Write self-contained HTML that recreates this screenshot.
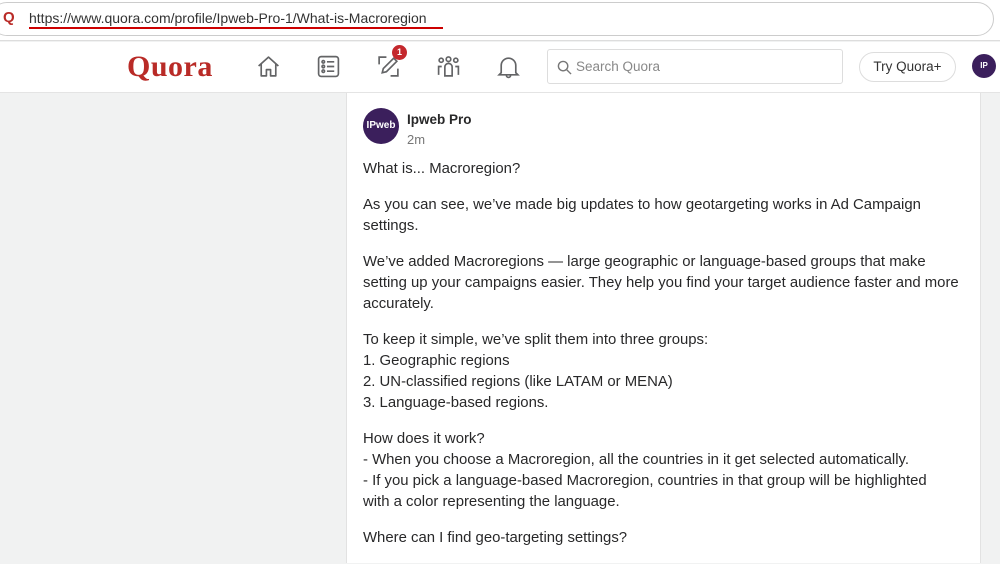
<!DOCTYPE html>
<html><head><meta charset="utf-8"><style>
*{margin:0;padding:0;box-sizing:border-box}
body{width:1000px;height:550px;overflow:hidden;background:#f1f2f2;font-family:"Liberation Sans",sans-serif;position:relative}
.url{position:absolute;left:0;top:0;width:1000px;height:41px;background:#fff;border-bottom:1px solid #ddd}
.urlin{position:absolute;left:-10px;top:2px;width:1004px;height:34px;border:1px solid #ccc;border-radius:17px;background:#fff}
.q{position:absolute;left:3px;top:9px;color:#b92b27;font-weight:bold;font-size:15px}
.u{position:absolute;left:29px;top:10px;font-size:14px;color:#333}
.ul{position:absolute;left:29px;top:27px;width:414px;height:2px;background:#c00}
.hdr{position:absolute;left:0;top:42px;width:1000px;height:51px;background:#fff;border-bottom:1px solid #e4e4e4}
.logo{position:absolute;left:127px;top:8px;font-family:"Liberation Serif",serif;font-weight:bold;font-size:30px;color:#b92b27;letter-spacing:0.5px}
.ic{position:absolute;top:12px}
.badge{position:absolute;left:392px;top:3px;width:15px;height:15px;border-radius:50%;background:#c4282d;color:#fff;font-size:9px;font-weight:bold;text-align:center;line-height:15px}
.search{position:absolute;left:547px;top:7px;width:296px;height:35px;border:1px solid #ddd;border-radius:3px}
.search span{position:absolute;left:28px;top:9px;font-size:13.5px;color:#888}
.try{position:absolute;left:859px;top:10px;width:97px;height:30px;border:1px solid #ddd;border-radius:15px;font-size:13.5px;color:#333;text-align:center;line-height:28px}
.av{position:absolute;border-radius:50%;background:#3b1f5c;color:#fff;font-weight:bold;text-align:center;overflow:hidden}
.card{position:absolute;left:346px;top:93px;width:635px;height:470px;background:#fff;border-left:1px solid #e2e2e2;border-right:1px solid #e2e2e2}
.name{position:absolute;left:60px;top:19px;font-size:13.5px;font-weight:bold;color:#282829}
.time{position:absolute;left:60px;top:39px;font-size:13px;color:#777}
.txt{position:absolute;left:16px;top:66px;font-size:14.9px;line-height:21px;color:#282829;white-space:nowrap}
.txt p{margin-bottom:15px}
</style></head><body>
<div class="url"><div class="urlin"></div><div class="q">Q</div><div class="u">https://www.quora.com/profile/Ipweb-Pro-1/What-is-Macroregion</div><div class="ul"></div></div>
<div class="hdr">
<div class="logo">Quora</div>
<svg class="ic" style="left:256px" width="25" height="25" viewBox="0 0 24 24" fill="none" stroke="#636466" stroke-width="1.6" stroke-linejoin="round"><path d="M2.5 11.5 12 3l9.5 8.5M5 9.5V21h5v-6h4v6h5V9.5"/></svg>
<svg class="ic" style="left:316px" width="25" height="25" viewBox="0 0 24 24" fill="none" stroke="#636466" stroke-width="1.6"><rect x="2.5" y="2.5" width="19" height="19" rx="2.5"/><circle cx="7" cy="7.5" r="1.2"/><circle cx="7" cy="12" r="1.2"/><circle cx="7" cy="16.5" r="1.2"/><path d="M10.5 7.5h7M10.5 12h7M10.5 16.5h7"/></svg>
<svg class="ic" style="left:376px" width="25" height="25" viewBox="0 0 24 24" fill="none" stroke="#636466" stroke-width="1.6"><path d="M3 10V3h7M21 14v7h-7M6 18l1-4L17 4l3 3L10 17z"/></svg>
<div class="badge">1</div>
<svg class="ic" style="left:436px" width="25" height="25" viewBox="0 0 24 24" fill="none" stroke="#636466" stroke-width="1.6"><circle cx="12" cy="5" r="2.2"/><circle cx="5" cy="6" r="2"/><circle cx="19" cy="6" r="2"/><path d="M8.5 21v-8.5a3.5 3.5 0 0 1 7 0V21zM2.5 20v-8h3M21.5 20v-8h-3"/></svg>
<svg class="ic" style="left:496px" width="25" height="25" viewBox="0 0 24 24" fill="none" stroke="#636466" stroke-width="1.6"><path d="M5 18V11a7 7 0 0 1 14 0v7l2 2H3zM10 20.5a2 2 0 0 0 4 0"/></svg>
<div class="search"><svg style="position:absolute;left:9px;top:10px" width="15" height="15" viewBox="0 0 16 16" fill="none" stroke="#777" stroke-width="1.5"><circle cx="6.5" cy="6.5" r="5"/><path d="M10.5 10.5 15 15"/></svg><span>Search Quora</span></div>
<div class="try">Try Quora+</div>
<div class="av" style="left:972px;top:12px;width:24px;height:24px;font-size:8px;line-height:24px">IP</div>
</div>
<div class="card">
<div class="av" style="left:16px;top:15px;width:36px;height:36px;font-size:10px;line-height:36px">IPweb</div>
<div class="name">Ipweb Pro</div>
<div class="time">2m</div>
<div class="txt">
<p>What is... Macroregion?</p>
<p>As you can see, we’ve made big updates to how geotargeting works in Ad Campaign<br>settings.</p>
<p>We’ve added Macroregions — large geographic or language-based groups that make<br>setting up your campaigns easier. They help you find your target audience faster and more<br>accurately.</p>
<p>To keep it simple, we’ve split them into three groups:<br>1. Geographic regions<br>2. UN-classified regions (like LATAM or MENA)<br>3. Language-based regions.</p>
<p>How does it work?<br>- When you choose a Macroregion, all the countries in it get selected automatically.<br>- If you pick a language-based Macroregion, countries in that group will be highlighted<br>with a color representing the language.</p>
<p>Where can I find geo-targeting settings?</p>
</div>
</div>
</body></html>
